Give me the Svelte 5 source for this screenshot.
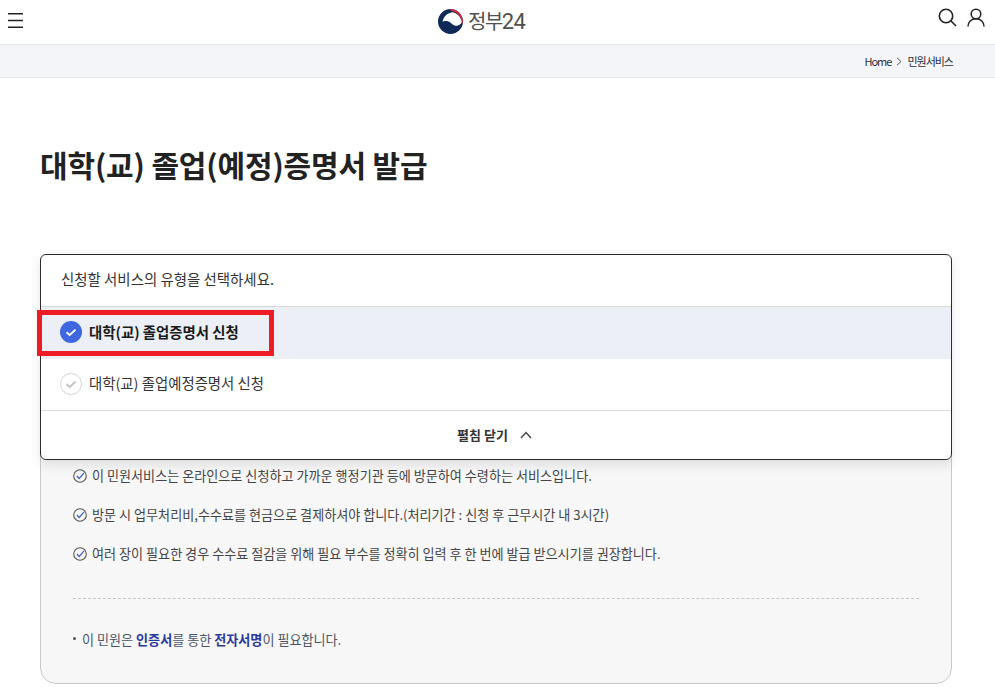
<script>
  const notes = [
    '이 민원서비스는 온라인으로 신청하고 가까운 행정기관 등에 방문하여 수령하는 서비스입니다.',
    '방문 시 업무처리비,수수료를 현금으로 결제하셔야 합니다.(처리기간 : 신청 후 근무시간 내 3시간)',
    '여러 장이 필요한 경우 수수료 절감을 위해 필요 부수를 정확히 입력 후 한 번에 발급 받으시기를 권장합니다.'
  ];
</script>

<div class="page">
  <header class="top">
    <button class="icon-btn menu" aria-label="메뉴">
      <svg width="15" height="15" viewBox="0 0 15 15"><path d="M0 .7h15M0 7.500h15M0 14.300h15" stroke="#222" stroke-width="1.400" fill="none"/></svg>
    </button>
    <div class="logo">
      <svg width="25" height="25" viewBox="0 0 24 24">
        <circle cx="12" cy="12" r="12" fill="#0f2a56"/>
        <path d="M4.500 12.500C4.800 7.500 8.800 4 12.500 3.500 14 1.500 22.500 6 22.800 12.500 22.800 14.500 19 16.500 16.500 16 13.500 15.500 12.500 12.500 9.500 11.800 7.500 11.400 5.500 11.500 4.500 12.500z" fill="#fff"/>
        <path d="M12 0C18.600 0 24 5.400 24 12c0 1-.1 2-.4 3C23.500 8.500 18.500 2.400 12 1.700z" fill="#d62a3c"/>
      </svg>
      <span class="logo-text"><span class="ko">정부</span>24</span>
    </div>
    <div class="top-right">
      <button class="icon-btn" aria-label="검색">
        <svg width="19" height="19" viewBox="0 0 19 19" fill="none" stroke="#222" stroke-width="1.600"><circle cx="8" cy="8" r="6.700"/><path d="M12.800 12.800L18 18"/></svg>
      </button>
      <button class="icon-btn" aria-label="내 정보">
        <svg width="18" height="19" viewBox="0 0 18 19" fill="none" stroke="#222" stroke-width="1.500"><circle cx="9" cy="6" r="4.800"/><path d="M1 18.500c0-4.500 3.200-7.700 8-7.700s8 3.200 8 7.700"/></svg>
      </button>
    </div>
  </header>

  <nav class="crumb">
    <span class="home">Home</span>
    <svg width="6" height="9" viewBox="0 0 6 9" fill="none" stroke="#555" stroke-width="1"><path d="M1 .8l4 3.700-4 3.700"/></svg>
    <span class="cur">민원서비스</span>
  </nav>

  <main class="main">
    <h1>대학(교) 졸업(예정)증명서 발급</h1>

    <section class="stack">
      <div class="select">
        <div class="select-head"><span>신청할 서비스의 유형을 선택하세요.</span></div>
        <div class="opt active">
          <svg class="tick" width="22" height="22" viewBox="0 0 22 22"><circle cx="11" cy="11" r="11" fill="#3f67e0"/><path d="M6.500 11.200l3.200 2.800 5.800-5.300" fill="none" stroke="#fff" stroke-width="1.800"/></svg>
          <span>대학(교) 졸업증명서 신청</span>
          <i class="mark"></i>
        </div>
        <div class="opt">
          <svg width="22" height="22" viewBox="0 0 22 22"><circle cx="11" cy="11" r="10.500" fill="#fff" stroke="#d4d4d4"/><path d="M6.500 11.200l3.200 2.800 5.800-5.300" fill="none" stroke="#c4c4c4" stroke-width="2"/></svg>
          <span>대학(교) 졸업예정증명서 신청</span>
        </div>
        <div class="fold">
          <span>펼침 닫기</span>
          <svg width="12" height="8" viewBox="0 0 12 8" fill="none" stroke="#444" stroke-width="1.400"><path d="M1 7l5-5.500L11 7"/></svg>
        </div>
      </div>

      <div class="info">
        <ul class="notes">
          {#each notes as n}
            <li>
              <svg width="14" height="14" viewBox="0 0 14 14" fill="none"><circle cx="7" cy="7" r="6.300" stroke="#555" stroke-width="1.100"/><path d="M3.900 7l2.300 2.500 4.900-5.600" stroke="#4a5fc0" stroke-width="1.200"/></svg>
              <span>{n}</span>
            </li>
          {/each}
        </ul>
        <hr />
        <p class="foot"><i class="dot"></i>이 민원은 <b>인증서</b>를 통한 <b>전자서명</b>이 필요합니다.</p>
      </div>
    </section>
  </main>
</div>

<style>
  :global(body) { margin: 0; background: #fff; }
  .page {
    font-family: "Noto Sans CJK KR", "Noto Sans", sans-serif;
    color: #222;
    height: 697px;
    overflow: hidden;
  }
  .icon-btn { border: 0; background: none; padding: 0; display: flex; cursor: pointer; }
  .top {
    height: 44px;
    display: flex;
    align-items: flex-start;
    justify-content: space-between;
    padding: 0 10px 0 8px;
    position: relative;
  }
  .menu { margin-top: 13px; }
  .logo {
    position: absolute;
    left: 438px;
    top: 8px;
    display: flex;
    align-items: center;
    gap: 5px;
    color: #505050;
  }
  .logo-text { font-family: Roboto, "Liberation Sans", sans-serif; font-size: 22px; letter-spacing: -0.8px; line-height: 25px; }
  .logo-text .ko { font-family: "Noto Sans CJK KR", sans-serif; font-size: 20px; font-weight: 400; letter-spacing: -1.500px; }
  .top-right { display: flex; gap: 10px; align-items: center; margin-top: 8px; }
  .crumb {
    height: 32px;
    background: #f4f5f9;
    border-top: 1px solid #e2e4ec;
    border-bottom: 1px solid #e6e7ec;
    display: flex;
    align-items: center;
    justify-content: flex-end;
    gap: 5px;
    padding-right: 42px;
    font-size: 11px;
    letter-spacing: -1px;
    color: #2b2f3a;
  }
  .main { padding: 0 43px 0 40px; }
  h1 {
    margin: 64px 0 0;
    font-size: 30px;
    line-height: 44px;
    font-weight: 700;
    letter-spacing: -0.15px;
    color: #222;
  }
  .stack { position: relative; margin-top: 68px; }
  .select {
    position: absolute;
    inset: 0 0 auto 0;
    z-index: 2;
    background: #fff;
    border: 1px solid #2b2b2b;
    border-radius: 6px;
    box-shadow: 0 5px 12px rgba(0,0,0,.1);
  }
  .select-head {
    height: 51px;
    display: flex;
    align-items: center;
    padding-left: 20px;
    font-size: 14.450px;
    color: #333;
    border-bottom: 1px solid #d8d8d8;
  }
  .select-head span { position: relative; top: -2px; }
  .opt {
    height: 51.500px;
    display: flex;
    align-items: center;
    gap: 7px;
    padding-left: 19px;
    font-size: 14.400px;
    color: #333;
    position: relative;
  }
  .opt span { position: relative; top: -1.500px; }
  .opt .tick { position: relative; top: -1px; }
  .opt.active { background: #eceff5; font-weight: 700; color: #1a1a1a; }
  .mark {
    position: absolute;
    left: -4px;
    top: 3px;
    width: 227px;
    height: 36px;
    border: 5px solid #ee1c25;
  }
  .fold {
    height: 48px;
    border-top: 1px solid #dcdcdc;
    display: flex;
    align-items: center;
    justify-content: center;
    gap: 12px;
    padding-right: 3px;
    font-size: 13px;
    font-weight: 700;
    color: #333;
  }
  .fold span { position: relative; top: -1px; }
  .info {
    height: 430px;
    box-sizing: border-box;
    background: #f7f7f8;
    border: 1px solid #c8c8c8;
    border-radius: 16px;
    padding: 211px 32px 0 32px;
  }
  .notes { list-style: none; margin: 0; padding: 0; display: flex; flex-direction: column; gap: 19px; }
  .notes li { display: flex; align-items: center; gap: 5px; font-size: 13.100px; line-height: 20px; color: #444; }
  hr { border: 0; border-top: 1px dashed #c8c8c8; margin: 34px 0 0; }
  .foot { margin: 31px 0 0; font-size: 13.100px; line-height: 20px; color: #4a5568; display: flex; align-items: center; white-space: pre-wrap; }
  .foot b { color: #2a3a9c; font-weight: 700; }
  .dot { width: 3px; height: 3px; border-radius: 50%; background: #555; margin-right: 6px; margin-top: -3px; }
</style>
